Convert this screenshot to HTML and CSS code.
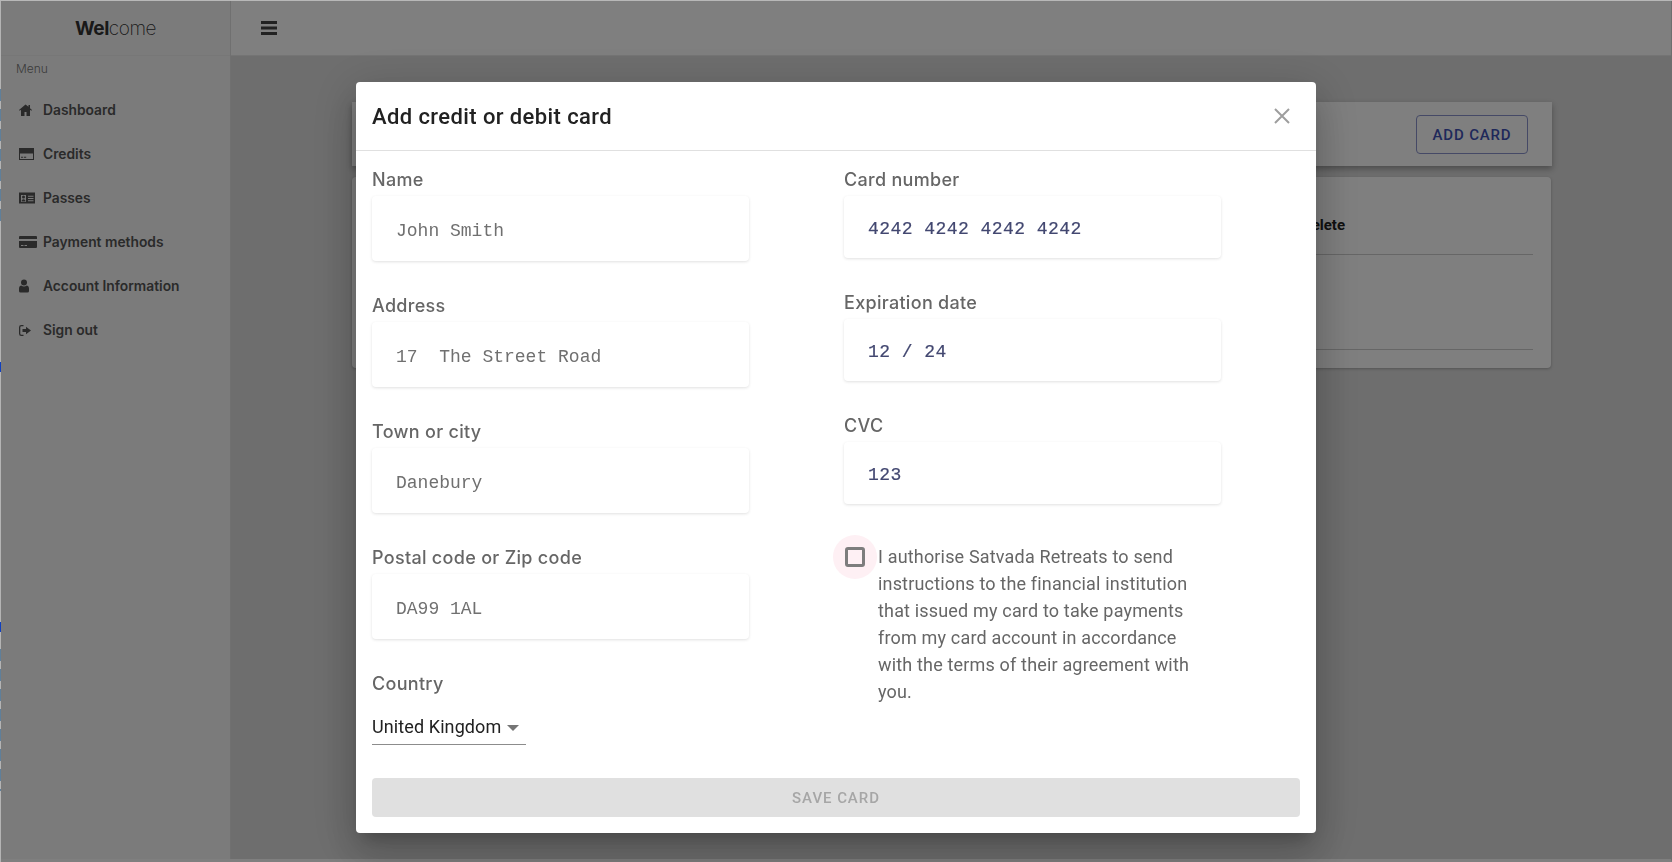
FILE: index.html
```html
<!DOCTYPE html>
<html lang="en">
<head>
<meta charset="utf-8">
<title>Add credit or debit card</title>
<link rel="stylesheet" href="styles.css">
</head>
<body>
<div class="app">
  <aside class="sidebar">
    <div class="brand"><span class="brand-bold">Wel</span><span class="brand-light">come</span></div>
    <div class="menu-title">Menu</div>
    <nav class="menu">
      <a class="menu-item"><svg class="mi" viewBox="0 0 18 14"><path d="M6.500 1.500 0 7l.7.800 1.300-1.100V13h3.500V9h2v4H11V6.700l1.300 1.100.7-.8-2-1.700V2H9.500v1.700z"/></svg>Dashboard</a>
      <a class="menu-item"><svg class="mi" viewBox="0 0 18 14"><path fill-rule="evenodd" d="M0 1h15v12H0zm1 5.500V12h13V6.500zM2 9.800h2.200v1H2zm3 0h2.200v1H5z"/></svg>Credits</a>
      <a class="menu-item"><svg class="mi" viewBox="0 0 18 14"><path fill-rule="evenodd" d="M0 1.500h16v11H0zM2 4v7h5V4zm7 .8v1h5.500v-1zm0 2.200v1h5.500V7zm0 2.200v1h5.500v-1z"/><circle cx="4.500" cy="6" r="1.500"/><path d="M2.500 10.500c0-1.500 1-2.300 2-2.300s2 .8 2 2.300z"/></svg>Passes</a>
      <a class="menu-item"><svg class="mi" viewBox="0 0 18 14"><path fill-rule="evenodd" d="M1 1h16a1 1 0 0 1 1 1v2H0V2a1 1 0 0 1 1-1zM0 6h18v6a1 1 0 0 1-1 1H1a1 1 0 0 1-1-1zm2 4v1h2.500v-1zm3.500 0v1H8v-1z"/></svg>Payment methods</a>
      <a class="menu-item"><svg class="mi" viewBox="0 0 18 14"><circle cx="5" cy="3.500" r="3"/><path d="M0 12v-2.500C0 7.500 1.200 6.500 2.300 6.500c.8.700 1.700 1 2.700 1s1.900-.3 2.700-1C8.800 6.500 10 7.500 10 9.500V12a1.500 1.500 0 0 1-1.500 1.500h-7A1.500 1.500 0 0 1 0 12z"/></svg>Account Information</a>
      <a class="menu-item"><svg class="mi" viewBox="0 0 18 14"><path d="M7 3.800V6H3.500v3H7v2.200L12 7.500z"/><path d="M4.500 2H2.300A2.300 2.300 0 0 0 0 4.300v6.400A2.300 2.300 0 0 0 2.300 13h2.200v-1.300H2.300a1 1 0 0 1-1-1V4.300a1 1 0 0 1 1-1h2.200z"/></svg>Sign out</a>
    </nav>
  </aside>
  <div class="main-col">
    <header class="topbar">
      <svg class="burger" viewBox="0 0 16 14"><path d="M0 0h16v3H0zM0 5.500h16v3H0zM0 11h16v3H0z"/></svg>
    </header>
    <main class="content">
      <section class="bar-card"><button class="add-card">ADD CARD</button></section>
      <section class="list-card">
        <div class="list-head"><span class="delete-col">Delete</span></div>
        <div class="list-row"></div>
      </section>
    </main>
  </div>
</div>
<div class="backdrop"></div>
<div class="dialog">
  <div class="dialog-head">
    <h2 class="dialog-title">Add credit or debit card</h2>
    <svg class="close" viewBox="0 0 16 16"><path d="M1 1l14 14M15 1 1 15"/></svg>
  </div>
  <div class="dialog-body">
    <div class="col col-left">
      <div class="field"><label class="label">Name</label><div class="input input-tall">John Smith</div></div>
      <div class="field"><label class="label">Address</label><div class="input input-tall">17&nbsp;&nbsp;The Street Road</div></div>
      <div class="field"><label class="label">Town or city</label><div class="input input-tall">Danebury</div></div>
      <div class="field"><label class="label">Postal code or Zip code</label><div class="input input-tall">DA99 1AL</div></div>
      <div class="field field-last"><label class="label">Country</label>
        <div class="select"><span>United Kingdom</span><i class="caret"></i></div>
      </div>
    </div>
    <div class="col col-right">
      <div class="field field-short"><label class="label">Card number</label><div class="input input-stripe">4242 4242 4242 4242</div></div>
      <div class="field field-short"><label class="label">Expiration date</label><div class="input input-stripe">12 / 24</div></div>
      <div class="field field-short"><label class="label">CVC</label><div class="input input-stripe">123</div></div>
      <div class="consent">
        <span class="check-halo"><span class="check-box"></span></span>
        <p class="consent-text">I authorise Satvada Retreats to send instructions to the financial institution that issued my card to take payments from my card account in accordance with the terms of their agreement with you.</p>
      </div>
    </div>
  </div>
  <div class="dialog-foot"><button class="save">SAVE CARD</button></div>
</div>
</body>
</html>
```
FILE: styles.css
```css
* { box-sizing: border-box; }
html, body { margin: 0; height: 100%; overflow: hidden; }
body { font-family: Roboto, "Liberation Sans", sans-serif; background: #dcdcdc; }
.app { display: flex; height: 862px; border-top: 1px solid transparent; border-left: 1px solid transparent; border-right: 1px solid transparent; border-bottom: 3px solid #fff; background: #dcdcdc; }
.sidebar { width: 230px; flex: none; background: #f7f7f7; border-right: 1px solid #e0e0e0; }
.brand { height: 55px; display: flex; align-items: center; justify-content: center; font-family: Inter, sans-serif; font-size: 19px; color: #333; border-bottom: 1px solid #eee; letter-spacing: -.45px; }
.brand-bold { font-weight: 700; }
.brand-light { font-weight: 200; }
.menu-title { font-family: Inter, sans-serif; font-size: 12px; font-weight: 300; color: #777; padding: 5px 15px 0; line-height: 15px; }
.menu { display: flex; flex-direction: column; padding-top: 12px; }
.menu-item { display: flex; align-items: center; height: 44px; padding-left: 18px; font-family: Inter, sans-serif; font-weight: 600; font-size: 13.800px; color: #555; }
.mi { width: 18px; height: 14px; margin-right: 6px; fill: #555; flex: none; }
.main-col { flex: 1; display: flex; flex-direction: column; min-width: 0; }
.topbar { height: 55px; background: #fff; border-bottom: 1px solid #e8e8e8; display: flex; align-items: center; padding-left: 30px; }
.burger { width: 16px; height: 14px; fill: #444; }
.content { flex: 1; padding: 46px 119px 0 121px; display: flex; flex-direction: column; gap: 11px; }
.bar-card { height: 64px; background: #fff; box-shadow: 0 3px 6px rgba(0,0,0,.3); display: flex; justify-content: flex-end; align-items: center; padding-right: 24px; }
.add-card { width: 112px; height: 39px; padding-top: 2px; border: 1px solid #8a93cc; border-radius: 4px; background: transparent; color: #3f51b5; font: 500 15px Roboto, sans-serif; letter-spacing: .85px; }
.list-card { height: 191px; margin-right: 1px; background: #fff; border-radius: 4px; box-shadow: 0 1px 3px rgba(0,0,0,.25); padding: 0 18px; }
.list-head { height: 78px; display: flex; justify-content: flex-end; align-items: center; border-bottom: 1px solid #ccc; }
.delete-col { font-weight: 700; font-size: 15px; color: #222; margin: 18px 188px 0 0; }
.list-row { height: 95px; border-bottom: 1px solid #ccc; }
.backdrop { position: fixed; inset: 0; background: rgba(0,0,0,.5); border-top: 1px solid #b8b8b8; }
.backdrop::before { content: ""; position: absolute; left: 0; top: 0; bottom: 0; width: 1px; background:
  linear-gradient(#1040c0, #1040c0) 0 361px / 1px 10px no-repeat,
  linear-gradient(#1040c0, #1040c0) 0 621px / 1px 10px no-repeat,
  linear-gradient(#b4b4b4 0 80px, transparent 80px 225px, #b4b4b4 225px 640px, transparent 640px 790px, #b4b4b4 790px),
  repeating-linear-gradient(#b4b4b4 0 8px, #5f7f9a 8px 20px); }
.dialog { position: fixed; left: 356px; top: 82px; width: 960px; height: 751px; background: #fff; border-radius: 4px; box-shadow: 0 11px 15px -7px rgba(0,0,0,.2), 0 24px 38px 3px rgba(0,0,0,.14), 0 9px 46px 8px rgba(0,0,0,.12); display: flex; flex-direction: column; }
.dialog-head { height: 69px; flex: none; display: flex; align-items: center; justify-content: space-between; padding: 0 26px 0 16px; border-bottom: 1px solid #e0e0e0; }
.dialog-title { margin: 0; font-size: 22px; font-weight: 500; color: #212121; letter-spacing: .4px; }
.close { width: 16px; height: 16px; stroke: #9e9e9e; stroke-width: 2; fill: none; }
.dialog-body { flex: 1; min-height: 0; display: grid; grid-template-columns: 377px 377px; column-gap: 95px; padding: 0 16px; }
.col { display: flex; flex-direction: column; min-height: 0; }
.field { height: 126px; padding-top: 14px; flex: none; }
.field-short { height: 123px; }
.field-last { height: 118px; }
.label { display: block; font-family: Inter, sans-serif; font-size: 18px; font-weight: 500; line-height: 30px; margin-bottom: 1px; color: #666; letter-spacing: .3px; }
.input { border-radius: 4px; background: #fff; box-shadow: 0 1px 3px rgba(0,0,0,.12); padding-left: 24px; display: flex; align-items: center; }
.input-tall { height: 65px; padding-top: 4px; font: 18px "Liberation Mono", monospace; color: #707070; }
.input-stripe { height: 62px; padding-top: 4px; font: 18px "Liberation Mono", monospace; color: #424770; letter-spacing: .45px; -webkit-text-stroke: .2px #424770; }
.select { width: 154px; height: 37px; margin-top: 9px; display: flex; align-items: center; gap: 6px; border-bottom: 1px solid #8c8c8c; font-size: 18px; color: #212121; letter-spacing: .1px; }
.caret { width: 0; height: 0; border: 6px solid transparent; border-top: 6px solid #757575; border-bottom: 0; margin-top: 4px; }
.consent { display: flex; margin-top: 15px; margin-left: -11px; }
.check-halo { width: 44px; height: 44px; border-radius: 50%; background: #fef0f4; flex: none; display: flex; align-items: center; justify-content: center; }
.check-box { width: 20px; height: 20px; border: 3px solid #7d7d7d; border-radius: 3px; }
.consent-text { margin: 8px 0 0 1px; width: 316px; font-size: 18px; line-height: 27px; color: #666; letter-spacing: .17px; }
.dialog-foot { padding: 0 16px 16px; flex: none; }
.save { width: 100%; height: 39px; border: 0; border-radius: 4px; background: #e0e0e0; color: #a6a6a6; font: 500 15px Roboto, sans-serif; letter-spacing: .95px; }
```
